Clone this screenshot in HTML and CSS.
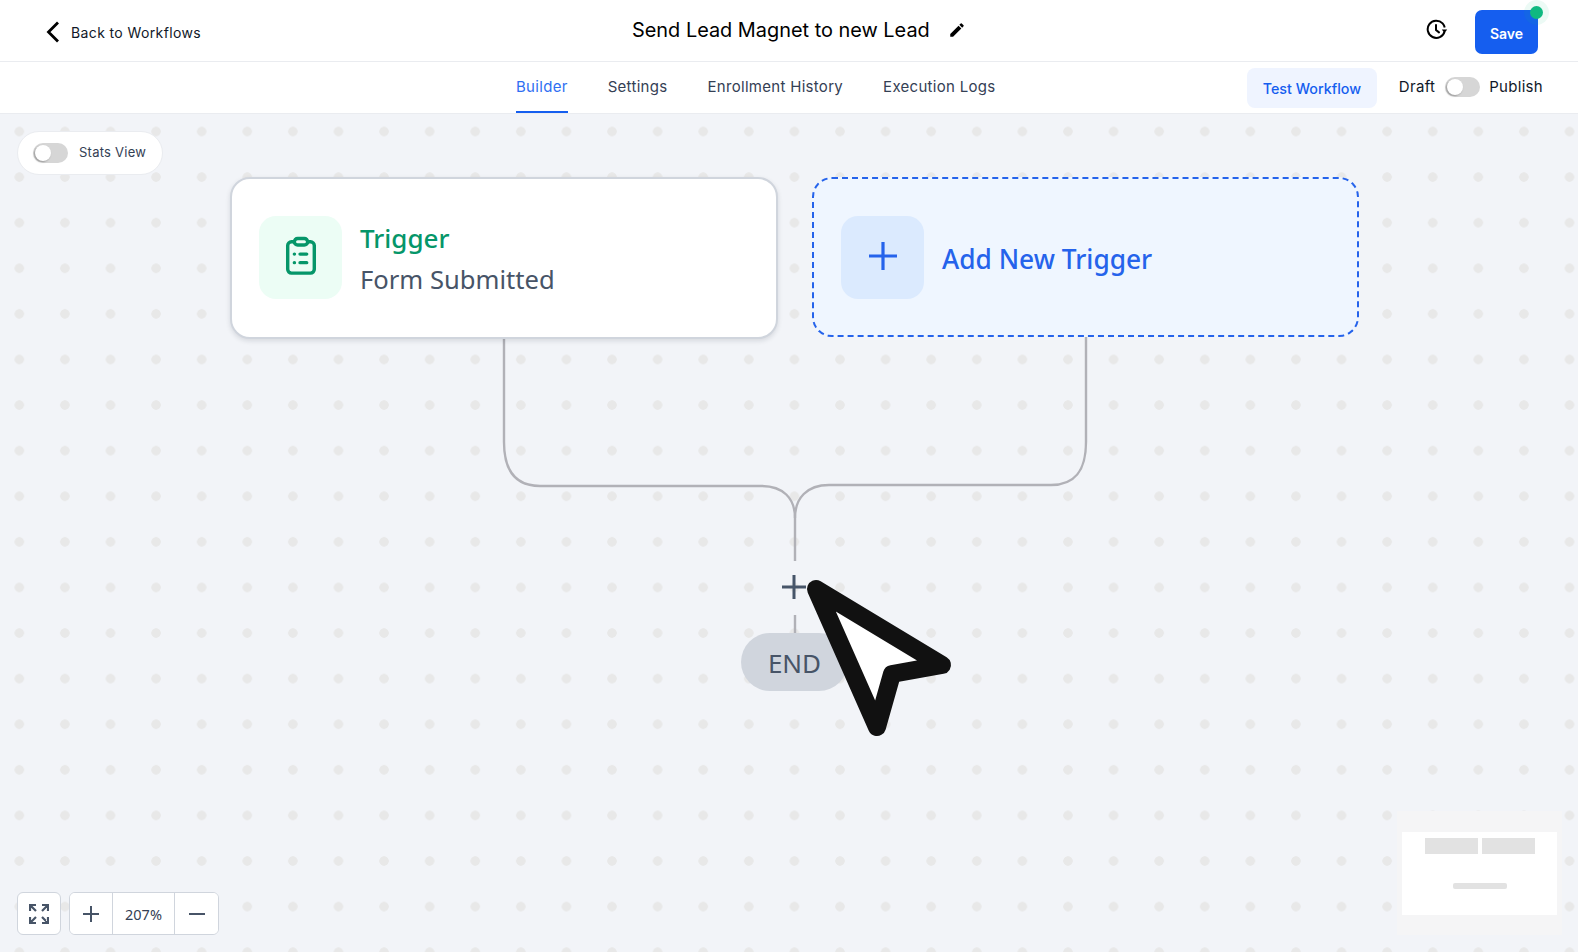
FILE: index.html
```html
<!DOCTYPE html>
<html lang="en">
<head>
    <meta charset="UTF-8">
    <meta name="viewport" content="width=device-width, initial-scale=1.0">
    <title>Workflow Builder</title>
    <link rel="stylesheet" href="styles.css">
</head>
<body>
    <!-- Top bar -->
    <header class="topbar">
        <a class="back-link">
            <svg class="back-icon" viewBox="0 0 14 22" fill="none" stroke="#000" stroke-width="2.8"><path d="M12 1.5 2.5 11 12 20.5"/></svg>
            <span>Back to Workflows</span>
        </a>
        <div class="title-wrap">
            <h1 class="title">Send Lead Magnet to new Lead</h1>
            <svg class="pencil-icon" viewBox="0 0 24 24" fill="#000"><path d="M3 17.25V21h3.75L17.81 9.94l-3.75-3.75L3 17.25zM20.71 7.04a.996.996 0 0 0 0-1.41l-2.34-2.34a.996.996 0 0 0-1.41 0l-1.83 1.83 3.75 3.75 1.83-1.83z"/></svg>
        </div>
        <div class="top-actions">
            <svg class="history-icon" viewBox="0 0 22 22" fill="none" stroke="#000" stroke-width="2">
                <path d="M18.6 12.5A8.6 8.6 0 1 1 16.6 4.4 8.6 8.6 0 0 1 18.7 8.5"/>
                <path d="M10 6v5l3 2.4" stroke-linecap="round"/>
                <path d="M15.8 10.6h5.4L18.5 14z" fill="#000" stroke="none"/>
            </svg>
            <button class="save-btn">Save<span class="status-dot"></span></button>
        </div>
    </header>

    <!-- Tabs -->
    <nav class="tabbar">
        <div class="tabs">
            <a class="tab active">Builder</a>
            <a class="tab">Settings</a>
            <a class="tab">Enrollment History</a>
            <a class="tab">Execution Logs</a>
        </div>
        <div class="tab-actions">
            <button class="test-btn">Test Workflow</button>
            <div class="publish">
                <span>Draft</span>
                <span class="toggle"></span>
                <span>Publish</span>
            </div>
        </div>
    </nav>

    <!-- Canvas -->
    <main class="canvas">
        <svg class="connectors" viewBox="0 0 1578 838" fill="none" stroke="#b1b1b7" stroke-width="2.4">
            <path d="M504 222V328C504 358 516 372 540 372H761C783 372 795 384 795 404"/>
            <path d="M1086 220V328C1086 358 1074 371 1051 371H829C807 371 795 384 795 404V447"/>
            <path d="M795 501V520"/>
        </svg>

        <div class="stats-pill">
            <span class="toggle"></span>
            <span class="stats-label">Stats View</span>
        </div>

        <div class="node trigger-node">
            <div class="node-icon green">
                <svg viewBox="0 0 40 46" width="38" height="44" fill="none" stroke="#059669" stroke-width="3.6" stroke-linecap="round">
                    <path d="M13 8H10a4 4 0 0 0-4 4v25a4 4 0 0 0 4 4h20a4 4 0 0 0 4-4V12a4 4 0 0 0-4-4h-3"/>
                    <rect x="13" y="4.5" width="14" height="7" rx="3.5"/>
                    <path d="M13 21h.1M19 21h7M13 30h.1M19 30h7"/>
                </svg>
            </div>
            <div class="node-text">
                <div class="node-title">Trigger</div>
                <div class="node-sub">Form Submitted</div>
            </div>
        </div>

        <div class="node add-node">
            <div class="node-icon blue">
                <svg viewBox="0 0 28 28" width="28" height="28" stroke="#2563eb" stroke-width="3.2"><path d="M14 0V28M0 14H28"/></svg>
            </div>
            <div class="add-label">Add New Trigger</div>
        </div>

        <svg class="add-step" viewBox="0 0 24 24" stroke="#475569" stroke-width="3"><path d="M12 0V24M0 12H24"/></svg>

        <div class="end-node">END</div>

        <svg class="cursor" viewBox="0 0 160 170">
            <path d="M16 14 142 90 92 99 77 152Z" fill="#fff" stroke="#111" stroke-width="18" stroke-linejoin="round"/>
        </svg>

        <div class="zoom-controls">
            <button class="ctl-btn fit">
                <svg viewBox="0 0 20 20" width="20" height="20" fill="none" stroke="#475467" stroke-width="2.2">
                    <path d="M1 7V1H7M2 2l5 5M19 7V1H13M18 2l-5 5M1 13v6H7M2 18l5-5M19 13v6H13M18 18l-5-5"/>
                </svg>
            </button>
            <div class="zoom-group">
                <button class="ctl-btn zoom-in">
                    <svg viewBox="0 0 16 16" width="16" height="16" stroke="#475467" stroke-width="2"><path d="M8 0V16M0 8H16"/></svg>
                </button>
                <span class="zoom-value">207%</span>
                <button class="ctl-btn zoom-out">
                    <svg viewBox="0 0 16 16" width="16" height="16" stroke="#475467" stroke-width="2"><path d="M0 8H16"/></svg>
                </button>
            </div>
        </div>

        <div class="minimap">
            <div class="mini-view">
                <div class="mini-row">
                    <span class="mini-node"></span>
                    <span class="mini-node"></span>
                </div>
                <span class="mini-end"></span>
            </div>
        </div>
    </main>
</body>
</html>
```

FILE: styles.css
```css
* {
    box-sizing: border-box;
}
html, body {
    height: 100%;
}
body {
    margin: 0;
    display: flex;
    flex-direction: column;
    overflow: hidden;
    font-family: Inter, "Liberation Sans", sans-serif;
    background-color: #f2f4f7;
    color: #101828;
}
button {
    font-family: inherit;
    border: none;
    cursor: pointer;
}

/* Top bar */
.topbar {
    height: 62px;
    flex: none;
    display: grid;
    grid-template-columns: 632px auto 1fr;
    align-items: center;
    background-color: #fff;
    border-bottom: 1px solid #eaecf0;
}
.back-link {
    display: flex;
    align-items: center;
    gap: 11px;
    padding: 3px 0 0 46px;
    font-size: 14px;
    letter-spacing: 0.38px;
    color: #101828;
}
.back-icon {
    width: 14px;
    height: 22px;
}
.title-wrap {
    display: flex;
    align-items: center;
    gap: 18px;
    padding-bottom: 1px;
}
.title {
    margin: 0;
    font-size: 19.9px;
    font-weight: 400;
    color: #000;
}
.pencil-icon {
    width: 18px;
    height: 18px;
}
.top-actions {
    display: flex;
    align-items: center;
    justify-content: flex-end;
    gap: 27px;
    padding-right: 40px;
}
.history-icon {
    width: 22px;
    height: 22px;
    margin-bottom: 1px;
}
.save-btn {
    position: relative;
    width: 63px;
    height: 44px;
    margin-top: 3px;
    padding: 2px 0 0;
    border-radius: 7px;
    background-color: #155eef;
    color: #fff;
    font-size: 14px;
    font-weight: 600;
}
.status-dot {
    position: absolute;
    top: -4px;
    right: -5px;
    width: 13px;
    height: 13px;
    border-radius: 50%;
    background-color: #10b981;
    box-shadow: 0 0 0 6px rgba(16, 185, 129, 0.08);
}

/* Tabs */
.tabbar {
    height: 52px;
    flex: none;
    display: flex;
    justify-content: space-between;
    background-color: #fff;
    border-bottom: 1px solid #eaecf0;
}
.tabs {
    display: flex;
    gap: 40px;
    padding-left: 516px;
}
.tab {
    display: flex;
    align-items: center;
    height: 51px;
    padding-bottom: 1px;
    font-size: 15px;
    letter-spacing: 0.3px;
    color: #344054;
    border-bottom: 2px solid transparent;
}
.tab.active {
    color: #2f6ff2;
    border-bottom-color: #155eef;
}
.tab-actions {
    display: flex;
    align-items: center;
    gap: 22px;
    padding: 0 35px 2px 0;
}
.test-btn {
    width: 130px;
    height: 40px;
    margin-top: 2px;
    padding-top: 3px;
    border-radius: 8px;
    background-color: #eff4ff;
    color: #155eef;
    font-size: 14.3px;
    font-weight: 500;
}
.publish {
    display: flex;
    align-items: center;
    gap: 9.5px;
    font-size: 15px;
    letter-spacing: 0.3px;
    color: #101828;
}
.toggle {
    position: relative;
    display: inline-block;
    width: 35px;
    height: 20px;
    border-radius: 10px;
    background-color: #d6d6d6;
}
.toggle::after {
    content: "";
    position: absolute;
    top: 2px;
    left: 2px;
    width: 16px;
    height: 16px;
    border-radius: 50%;
    background-color: #fff;
    box-shadow: -1px 1px 2px rgba(0, 0, 0, 0.3);
}

/* Canvas */
.canvas {
    position: relative;
    flex: 1;
    overflow: hidden;
    background-color: #f2f4f8;
    background-image: radial-gradient(circle, #e8e8e8 4.4px, transparent 5px);
    background-size: 45.6px 45.6px;
    background-position: -3.5px -5.3px;
}
.connectors {
    position: absolute;
    top: 0;
    left: 0;
    width: 1578px;
    height: 838px;
}
.stats-pill {
    position: absolute;
    top: 17px;
    left: 17px;
    width: 146px;
    height: 44px;
    display: flex;
    align-items: center;
    gap: 11px;
    padding-left: 15px;
    border: 1px solid #eaecf0;
    border-radius: 22px;
    background-color: #fff;
    font-size: 13px;
    letter-spacing: 0.25px;
    color: #344054;
}
.stats-label {
    margin-bottom: 2px;
}
.node {
    position: absolute;
    top: 63px;
    display: flex;
    align-items: center;
    gap: 18px;
    padding-left: 27px;
    border-radius: 20px;
    font-family: "Noto Sans", sans-serif;
}
.trigger-node {
    left: 230px;
    width: 548px;
    height: 162px;
    padding-bottom: 1px;
    background-color: #fff;
    border: 2px solid #d0d5dd;
    box-shadow: 0 2px 5px rgba(16, 24, 40, 0.12);
}
.add-node {
    left: 812px;
    width: 547px;
    height: 160px;
    background-color: #eff6ff;
    border: 2px dashed #2563eb;
}
.node-icon {
    width: 83px;
    height: 83px;
    flex: none;
    display: flex;
    align-items: center;
    justify-content: center;
    padding-bottom: 4px;
    border-radius: 17px;
}
.node-icon.green {
    background-color: #ecfdf5;
}
.node-icon.blue {
    padding-bottom: 3px;
    background-color: #dbeafe;
}
.node-text {
    margin-top: 4px;
}
.node-title {
    font-size: 26px;
    font-weight: 500;
    line-height: 39px;
    color: #059669;
}
.node-sub {
    font-size: 25.6px;
    line-height: 43px;
    color: #475467;
}
.add-label {
    margin-top: 4px;
    font-size: 26.3px;
    font-weight: 500;
    color: #2563eb;
}
.add-step {
    position: absolute;
    top: 461px;
    left: 782px;
    width: 24px;
    height: 24px;
}
.end-node {
    position: absolute;
    top: 519px;
    left: 741px;
    width: 107px;
    height: 58px;
    display: flex;
    align-items: center;
    justify-content: center;
    padding-top: 1px;
    border-radius: 29px;
    background-color: #d0d5dd;
    font-family: "Noto Sans", sans-serif;
    font-size: 26px;
    color: #475467;
}
.cursor {
    position: absolute;
    top: 461px;
    left: 800px;
    width: 160px;
    height: 170px;
}

/* Bottom controls */
.zoom-controls {
    position: absolute;
    left: 17px;
    bottom: 17px;
    display: flex;
    gap: 8px;
}
.ctl-btn {
    height: 43px;
    display: flex;
    align-items: center;
    justify-content: center;
    padding: 0;
    background-color: #fff;
}
.ctl-btn.fit {
    width: 44px;
    border: 1px solid #d0d5dd;
    border-radius: 6px;
}
.zoom-group {
    display: flex;
    align-items: center;
    height: 43px;
    border: 1px solid #d0d5dd;
    border-radius: 6px;
    overflow: hidden;
    background-color: #fff;
}
.zoom-group .ctl-btn {
    height: 41px;
}
.zoom-in {
    width: 42px;
}
.zoom-out {
    width: 43px;
}
.zoom-value {
    width: 63px;
    height: 41px;
    display: flex;
    align-items: center;
    justify-content: center;
    border-left: 1px solid #d0d5dd;
    border-right: 1px solid #d0d5dd;
    font-family: "Noto Sans", sans-serif;
    font-size: 14.5px;
    color: #344054;
}

/* Minimap */
.minimap {
    position: absolute;
    right: 16px;
    bottom: 17px;
    width: 165px;
    height: 124px;
    padding: 21px 5px 20px;
    background-color: #f5f5f6;
}
.mini-view {
    display: flex;
    flex-direction: column;
    align-items: center;
    gap: 29px;
    height: 83px;
    padding-top: 6px;
    background-color: #fff;
}
.mini-row {
    display: flex;
    gap: 4px;
}
.mini-node {
    width: 53px;
    height: 16px;
    background-color: #e2e2e2;
}
.mini-end {
    width: 54px;
    height: 6px;
    border-radius: 2px;
    background-color: #e2e2e2;
}
```
